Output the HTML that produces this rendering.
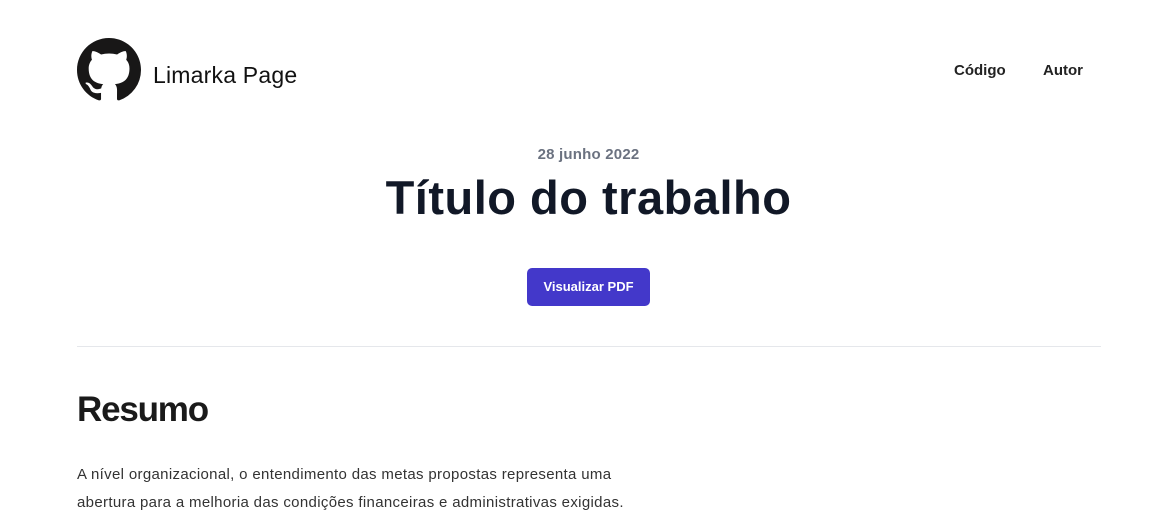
<!DOCTYPE html>
<html><head><meta charset="utf-8"><style>
body{margin:0;background:#fff;font-family:"Liberation Sans",sans-serif;width:1170px;height:526px;overflow:hidden;position:relative}
.a{position:absolute}
</style></head><body>
<svg class="a" style="left:77px;top:38px" width="64" height="64" viewBox="0 0 16 16"><path fill="#181717" d="M8 0C3.58 0 0 3.58 0 8c0 3.540 2.29 6.530 5.47 7.59.4.07.55-.17.55-.38 0-.19-.01-.82-.01-1.49-2.010.37-2.530-.49-2.690-.94-.09-.23-.48-.94-.82-1.130-.28-.15-.68-.52-.01-.53.63-.01 1.080.58 1.230.82.72 1.210 1.870.87 2.330.66.07-.52.28-.87.51-1.07-1.780-.2-3.640-.89-3.640-3.95 0-.87.31-1.590.82-2.150-.08-.2-.36-1.020.08-2.12 0 0 .67-.21 2.2.82.64-.18 1.320-.27 2-.27.68 0 1.360.09 2 .27 1.530-1.040 2.2-.82 2.2-.82.44 1.1.16 1.920.08 2.12.51.56.82 1.270.82 2.15 0 3.070-1.870 3.750-3.650 3.95.29.25.54.73.54 1.48 0 1.070-.01 1.930-.01 2.2 0 .21.15.46.55.38A8.013 8.013 0 0016 8c0-4.42-3.58-8-8-8z"/></svg>
<div class="a" style="left:153px;top:62px;font-size:23px;color:#111;letter-spacing:0.2px">Limarka Page</div>
<div class="a" style="left:954px;top:62px;font-size:15px;font-weight:bold;color:#222">Código</div>
<div class="a" style="left:1043px;top:62px;font-size:15px;font-weight:bold;color:#222">Autor</div>
<div class="a" style="left:0;width:1177px;text-align:center;top:146px;font-size:15px;font-weight:bold;color:#6b7280;letter-spacing:0.2px">28 junho 2022</div>
<div class="a" style="left:0;width:1177px;text-align:center;top:170px;font-size:47px;font-weight:bold;color:#111827;letter-spacing:0.5px">Título do trabalho</div>
<div class="a" style="left:527px;top:268px;width:123px;height:38px;background:#4338ca;border-radius:5px;color:#fff;font-size:13px;font-weight:bold;line-height:38px;text-align:center">Visualizar PDF</div>
<div class="a" style="left:77px;top:346px;width:1024px;height:1px;background:#e5e7eb"></div>
<div class="a" style="left:77px;top:390px;font-size:35px;font-weight:bold;color:#1a1a1a;letter-spacing:-1.2px">Resumo</div>
<div class="a" style="left:77px;top:461px;font-size:15px;line-height:28px;color:#333;letter-spacing:0.33px">A nível organizacional, o entendimento das metas propostas representa uma<br>abertura para a melhoria das condições financeiras e administrativas exigidas.</div>
</body></html>
